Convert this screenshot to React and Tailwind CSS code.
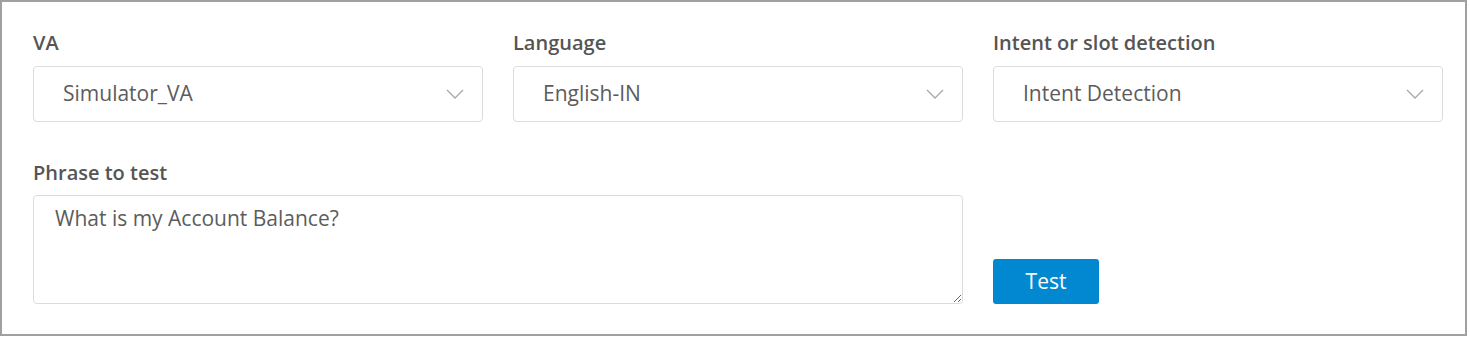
import React from "react";

const font = { fontFamily: '"Open Sans", "Noto Sans", sans-serif' };

function Chevron() {
  return (
    <svg width="18" height="10" viewBox="0 0 18 10" fill="none" className="shrink-0">
      <path d="M1 1 L9 9 L17 1" stroke="#a8a8a8" strokeWidth="1.3" />
    </svg>
  );
}

function Field({ label, value }) {
  return (
    <div className="flex flex-col">
      <div className="text-[20px] leading-[26px] font-semibold text-[#555555] mb-[10px]">{label}</div>
      <div className="h-[56px] border border-[#dcdcdc] rounded-[4px] flex items-center justify-between pl-[29px] pr-[18px] bg-white">
        <span className="text-[21px] text-[#5c5c5c]">{value}</span>
        <Chevron />
      </div>
    </div>
  );
}

export default function App() {
  return (
    <div style={font} className="w-[1467px] h-[336px] border-2 border-[#a0a0a0] bg-white pl-[31px] pt-[28px]">
      <div className="grid grid-cols-[450px_450px_450px] gap-x-[30px]">
        <Field label="VA" value="Simulator_VA" />
        <Field label="Language" value="English-IN" />
        <Field label="Intent or slot detection" value="Intent Detection" />
      </div>
      <div className="grid grid-cols-[930px_450px] gap-x-[30px] mt-[38px]">
        <div className="flex flex-col">
          <div className="text-[20px] leading-[26px] font-semibold text-[#555555] mb-[9px]">Phrase to test</div>
          <textarea
            defaultValue="What is my Account Balance?"
            style={font}
            className="h-[109px] w-full border border-[#dcdcdc] rounded-[4px] px-[21px] pt-[8px] pb-[8px] text-[21px] leading-[28px] text-[#5c5c5c] outline-none resize"
          />
        </div>
        <div className="flex items-end">
          <button className="w-[106px] h-[45px] bg-[#0288d1] rounded-[3px] text-white text-[21px]" style={font}>
            Test
          </button>
        </div>
      </div>
    </div>
  );
}
